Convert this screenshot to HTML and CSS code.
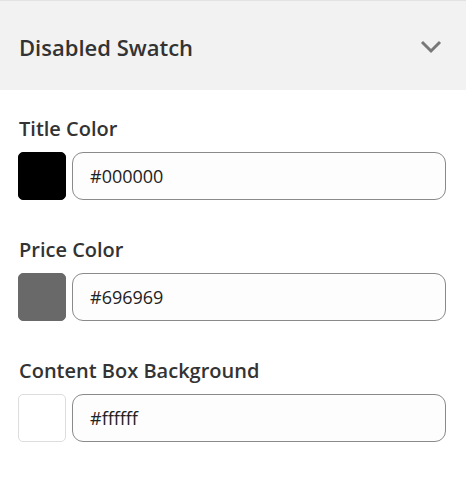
FILE: index.html
```html
<!DOCTYPE html>
<html>
<head>
<meta charset="utf-8">
<link rel="stylesheet" href="styles.css">
</head>
<body>
<div class="panel">
  <div class="header">
    <span class="header-title">Disabled Swatch</span>
    <svg class="chevron" width="22" height="14" viewBox="0 0 22 14"><path d="M2 2 L11 11 L20 2" fill="none" stroke="#787878" stroke-width="3"/></svg>
  </div>
  <div class="content">
    <div class="field">
      <div class="label">Title Color</div>
      <div class="row">
        <div class="swatch swatch-black"></div>
        <div class="input">#000000</div>
      </div>
    </div>
    <div class="field">
      <div class="label">Price Color</div>
      <div class="row">
        <div class="swatch swatch-gray"></div>
        <div class="input">#696969</div>
      </div>
    </div>
    <div class="field">
      <div class="label">Content Box Background</div>
      <div class="row">
        <div class="swatch swatch-white"></div>
        <div class="input">#ffffff</div>
      </div>
    </div>
  </div>
</div>
</body>
</html>
```
FILE: styles.css
```css
html, body {
  margin: 0;
  padding: 0;
  background: #ffffff;
}
body {
  font-family: "Open Sans", "Noto Sans", sans-serif;
  color: #333333;
}
.panel {
  width: 466px;
}
.header {
  box-sizing: border-box;
  height: 90px;
  border-top: 1px solid #e2e2e2;
  background: #f2f2f2;
  display: flex;
  align-items: center;
  justify-content: space-between;
  padding: 2px 24px 0 19px;
}
.header-title {
  font-size: 22px;
  font-weight: 600;
  color: #333333;
}
.chevron {
  display: block;
}
.content {
  padding: 27px 20px 0 18px;
  display: flex;
  flex-direction: column;
  gap: 38px;
}
.field {
  display: flex;
  flex-direction: column;
  gap: 11px;
}
.label {
  font-size: 20px;
  font-weight: 600;
  line-height: 24px;
  padding-left: 1px;
  color: #333333;
}
.row {
  display: flex;
  gap: 6px;
  height: 48px;
}
.swatch {
  box-sizing: border-box;
  width: 48px;
  height: 48px;
  border-radius: 5px;
  border: 1px solid #d6d6d6;
}
.swatch-black { background: #000000; border-color: #000000; }
.swatch-gray { background: #696969; border-color: #696969; }
.swatch-white { background: #ffffff; border-color: #dddddd; }
.input {
  box-sizing: border-box;
  flex: 1;
  height: 48px;
  border: 1px solid #8a8a8a;
  border-radius: 11px;
  background: #fdfdfd;
  display: flex;
  align-items: center;
  padding-left: 17px;
  font-size: 18px;
  color: #222222;
}
```
